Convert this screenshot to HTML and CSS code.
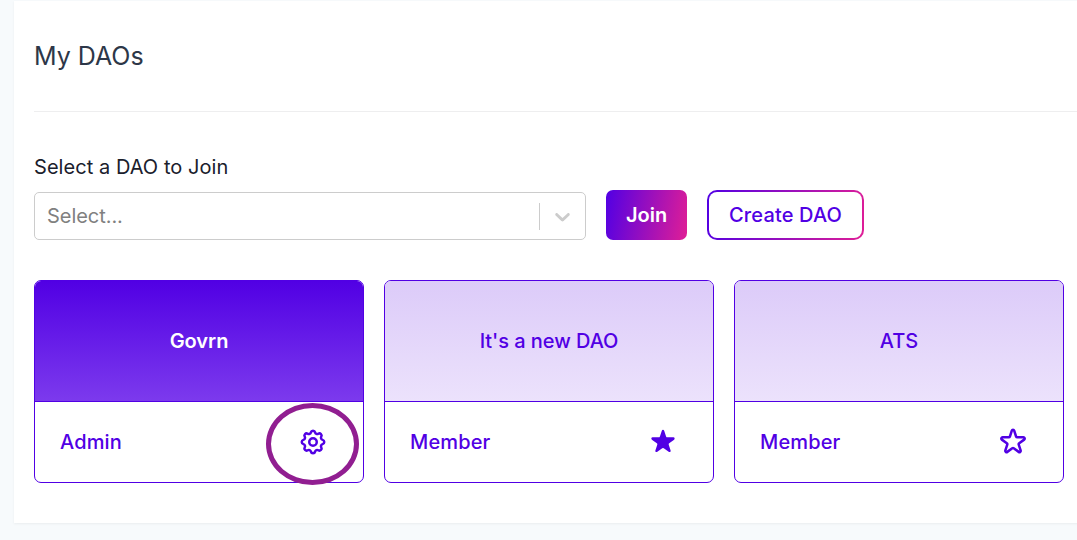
FILE: index.html
```html
<!DOCTYPE html>
<html lang="en">
<head>
<meta charset="utf-8">
<title>My DAOs</title>
<link rel="stylesheet" href="styles.css">
</head>
<body>
<main class="panel">
  <header class="panel-header"><h1 class="title">My DAOs</h1></header>
  <label class="label">Select a DAO to Join</label>
  <div class="join-row">
    <div class="select">
      <span class="placeholder">Select...</span>
      <span class="separator"></span>
      <svg class="chevron" viewBox="0 0 20 20"><path d="M4.516 7.548c0.436-0.446 1.043-0.481 1.576 0l3.908 3.747 3.908-3.747c0.533-0.481 1.141-0.446 1.574 0 0.436 0.445 0.408 1.197 0 1.615-0.406 0.418-4.695 4.502-4.695 4.502-0.217 0.223-0.502 0.335-0.787 0.335s-0.57-0.112-0.789-0.335c0 0-4.287-4.084-4.695-4.502s-0.436-1.17 0-1.615z"/></svg>
    </div>
    <button class="button join">Join</button>
    <button class="button create">Create DAO</button>
  </div>
  <div class="cards">
    <article class="card">
      <div class="card-top active">Govrn</div>
      <div class="card-bottom">
        <span class="role">Admin</span>
        <span class="icon-box">
          <svg class="icon outline" viewBox="0 0 24 24"><path d="M10.325 4.317c.426-1.756 2.924-1.756 3.35 0a1.724 1.724 0 002.573 1.066c1.543-.94 3.31.826 2.37 2.37a1.724 1.724 0 001.065 2.572c1.756.426 1.756 2.924 0 3.35a1.724 1.724 0 00-1.066 2.573c.94 1.543-.826 3.31-2.37 2.37a1.724 1.724 0 00-2.572 1.065c-.426 1.756-2.924 1.756-3.35 0a1.724 1.724 0 00-2.573-1.066c-1.543.94-3.31-.826-2.37-2.37a1.724 1.724 0 00-1.065-2.572c-1.756-.426-1.756-2.924 0-3.35a1.724 1.724 0 001.066-2.573c-.94-1.543.826-3.31 2.37-2.37.996.608 2.296.07 2.572-1.065z"/><circle cx="12" cy="12" r="3"/></svg>
          <span class="highlight"></span>
        </span>
      </div>
    </article>
    <article class="card">
      <div class="card-top">It's a new DAO</div>
      <div class="card-bottom">
        <span class="role">Member</span>
        <svg class="icon filled" viewBox="0 0 24 24"><path d="M11.049 2.927c.3-.921 1.603-.921 1.902 0l1.519 4.674a1 1 0 00.95.69h4.915c.969 0 1.371 1.24.588 1.81l-3.976 2.888a1 1 0 00-.363 1.118l1.518 4.674c.3.922-.755 1.688-1.538 1.118l-3.976-2.888a1 1 0 00-1.176 0l-3.976 2.888c-.783.57-1.838-.197-1.538-1.118l1.518-4.674a1 1 0 00-.363-1.118l-3.976-2.888c-.784-.57-.38-1.81.588-1.81h4.914a1 1 0 00.951-.69l1.519-4.674z"/></svg>
      </div>
    </article>
    <article class="card">
      <div class="card-top">ATS</div>
      <div class="card-bottom">
        <span class="role">Member</span>
        <svg class="icon outline" viewBox="0 0 24 24"><path d="M11.049 2.927c.3-.921 1.603-.921 1.902 0l1.519 4.674a1 1 0 00.95.69h4.915c.969 0 1.371 1.24.588 1.81l-3.976 2.888a1 1 0 00-.363 1.118l1.518 4.674c.3.922-.755 1.688-1.538 1.118l-3.976-2.888a1 1 0 00-1.176 0l-3.976 2.888c-.783.57-1.838-.197-1.538-1.118l1.518-4.674a1 1 0 00-.363-1.118l-3.976-2.888c-.784-.57-.38-1.81.588-1.81h4.914a1 1 0 00.951-.69l1.519-4.674z"/></svg>
      </div>
    </article>
  </div>
</main>
</body>
</html>
```
FILE: styles.css
```css
* { box-sizing: border-box; }
body {
  margin: 0;
  padding: 1px 0 0 14px;
  height: 540px;
  overflow: hidden;
  background: #f7fafc;
  color: #1a202c;
  font: 400 20px/30px Inter, "Liberation Sans", sans-serif;
}
.panel {
  width: 1100px;
  height: 522px;
  padding: 0 20px;
  background: #fff;
  box-shadow: 0 1px 3px rgba(0, 0, 0, .04), 0 1px 2px rgba(0, 0, 0, .02);
}
.panel-header {
  height: 111px;
  padding-top: 40px;
  border-bottom: 1px solid #eeeeef;
}
.title {
  margin: 0;
  font-size: 25px;
  font-weight: 400;
  line-height: 30px;
  color: #2d3748;
}
.label {
  display: block;
  margin-top: 40px;
  letter-spacing: .05px;
}
.join-row {
  display: flex;
  align-items: flex-end;
  gap: 20px;
  margin-top: 8px;
}
.select {
  display: flex;
  align-items: center;
  width: 552px;
  height: 48px;
  padding: 0 10px 0 12px;
  border: 1px solid #ccc;
  border-radius: 5px;
  color: #808080;
}
.placeholder { flex: 1; letter-spacing: -.05px; }
.separator { width: 1px; height: 27px; background: #ccc; margin-right: 10px; }
.chevron { width: 25px; height: 25px; fill: #ccc; }
.button {
  height: 50px;
  margin: 0;
  padding: 0;
  font: 500 20px/24px Inter, "Liberation Sans", sans-serif;
}
.join {
  width: 81px;
  border: 0;
  border-radius: 7px;
  color: #fff;
  font-weight: 600;
  background: linear-gradient(100deg, #5100e4 0%, #e01e96 100%);
}
.create {
  width: 157px;
  border: 2px solid transparent;
  border-radius: 10px;
  color: #5100e4;
  letter-spacing: .15px;
  background: linear-gradient(#fff, #fff) padding-box, linear-gradient(100deg, #5100e4, #e01e96) border-box;
}
.cards { display: flex; gap: 20px; margin-top: 40px; }
.card {
  flex: none;
  width: 330px;
  height: 203px;
  border: 1px solid #5100e4;
  border-radius: 7px;
  color: #5100e4;
  font-weight: 500;
}
.card-top {
  display: flex;
  align-items: center;
  justify-content: center;
  height: 121px;
  border-bottom: 1px solid #5100e4;
  border-radius: 6px 6px 0 0;
  letter-spacing: -.05px;
  background: linear-gradient(#dccbf9, #ece2fc);
}
.active {
  color: #fff;
  font-weight: 600;
  background: linear-gradient(#5100e4, #7c3aed);
}
.card-bottom {
  display: flex;
  align-items: center;
  justify-content: space-between;
  height: 80px;
  padding: 0 35px 0 25px;
}
.role { letter-spacing: .15px; }
.icon-box { position: relative; display: flex; }
.icon { display: block; width: 30px; height: 30px; }
.outline {
  fill: none;
  stroke: #5100e4;
  stroke-width: 2;
  stroke-linecap: round;
  stroke-linejoin: round;
}
.filled { fill: #5100e4; }
.highlight {
  position: absolute;
  left: -32px;
  top: -24px;
  width: 93px;
  height: 82px;
  border: 5px solid #911e91;
  border-radius: 50%;
}
```
